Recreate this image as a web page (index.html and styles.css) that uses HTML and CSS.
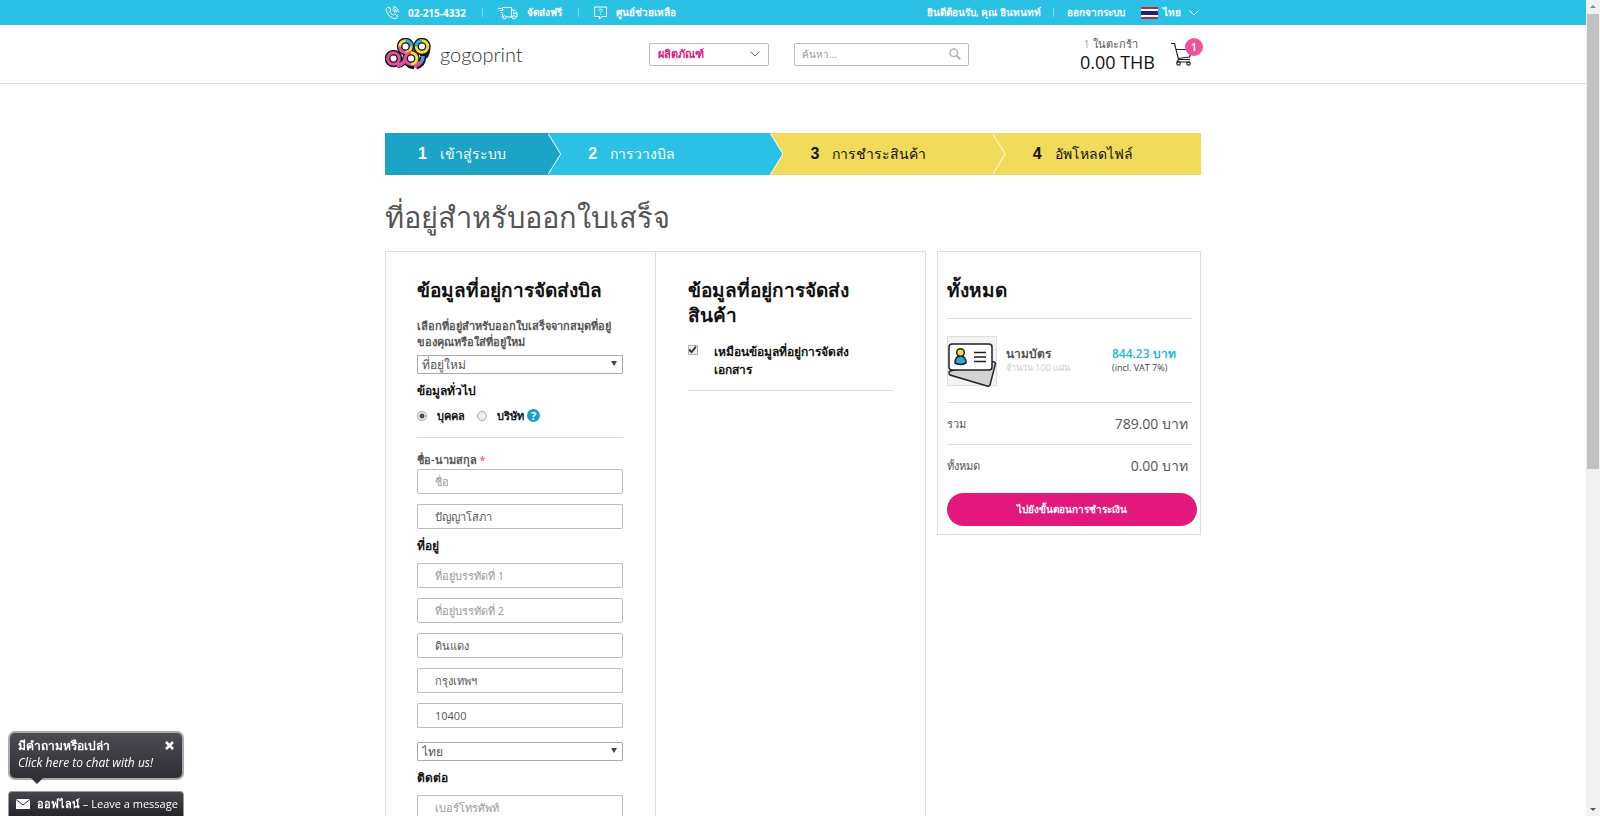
FILE: index.html
```html
<!DOCTYPE html>
<html lang="th">
<head>
    <meta charset="UTF-8">
    <meta name="viewport" content="width=device-width, initial-scale=1.0">
    <title>Gogoprint</title>
    <link rel="stylesheet" href="styles.css">
</head>
<body>
    <div class="page">
        <div class="topbar">
            <div class="container topbar-inner">
                <div class="top-left">
                    <a href="#" class="phone">
                        <svg width="14" height="14" viewBox="0 0 14 14"><path d="M2.5 1.5l1.6-.5 1.8 3-1.2 1.3c.7 1.7 2 3 3.7 3.8L9.700 8l2.900 1.900-.6 1.700c-.8 1.300-2.600 1.300-4.300.5C4.800 10.800 2.600 8.400 1.500 5.500 1 4 1.200 2.200 2.500 1.500zM7.500 4a2.800 2.800 0 0 1 2.500 2.700M7.700 2.300a4.600 4.600 0 0 1 4 4.200M8 .6a6.200 6.200 0 0 1 5.400 5.600"/></svg>
                        <span>02-215-4332</span>
                    </a>
                    <a href="#">
                        <svg width="20" height="14" viewBox="0 0 20 14"><path d="M4.500 5V1.500h9V11H8M5 11h-.5V7.500M13.500 4h3l2.500 3v4h-1.500M0 2.500h4.500M1.500 4.500h3M3 6.500h1.500M15.500 5.500v2H18M13.500 11h.5"/><circle cx="6.500" cy="11.300" r="1.600"/><circle cx="15.700" cy="11.300" r="1.600"/></svg>
                        <span>จัดส่งฟรี</span>
                    </a>
                    <a href="#">
                        <svg width="13" height="14" viewBox="0 0 13 14"><path d="M.5 1h12v9.500H7.500L5.500 13v-2.500h-5zM5 4.500c0-2 3-2 3 0 0 1-1.500 1-1.500 2.200M6.500 8v.8"/></svg>
                        <span>ศูนย์ช่วยเหลือ</span>
                    </a>
                </div>
                <div class="top-right">
                    <span>ยินดีต้อนรับ, คุณ อินทนทท์</span>
                    <a href="#">ออกจากระบบ</a>
                    <button type="button" class="lang">
                        <svg width="17" height="12" viewBox="0 0 17 12"><path fill="#c2273d" d="M0 0h17v12H0z"/><path fill="#fff" d="M0 2h17v8H0z"/><path fill="#22256b" d="M0 4h17v4H0z"/></svg>
                        <span>ไทย</span>
                        <svg class="chevron" width="10" height="6" viewBox="0 0 10 6"><path d="M.5.5L5 5 9.500.5"/></svg>
                    </button>
                </div>
            </div>
        </div>

        <header class="header">
            <div class="container header-inner">
                <a href="#" class="logo">
                    <svg width="46" height="32" viewBox="0 0 46 32" fill="none">
                        <g stroke="#17161a" stroke-width="6.500"><circle cx="20.500" cy="8.500" r="5.500"/><circle cx="37" cy="8.500" r="5.500"/><path d="M20.500 19c0 4-3 7.500-8 8M42 11c0 5-3 8-6 9M23 24c1 3 3 4 6 4M38 19c0 5-3 8-7 9"/><circle cx="8.500" cy="20.500" r="5.500"/><circle cx="26" cy="20.500" r="5.500"/></g>
                        <g stroke-width="3.500"><path stroke="#35a4dc" d="M20.500 18c0 5-3 8.500-8 9M38 18c0 5-3 8.500-7 9"/><path stroke="#e84ba0" d="M12 27.500c3 0 6-2 8-5M29 28.500c3-1 5-2 6-5"/><circle cx="20.500" cy="8.500" r="5.500" stroke="#f3dc35"/><path stroke="#35a4dc" d="M20.500 3a5.500 5.500 0 0 1 5.500 5.500"/><path stroke="#e84ba0" d="M20.500 14a5.500 5.500 0 0 1-5.500-5.500"/><circle cx="37" cy="8.500" r="5.500" stroke="#f3dc35"/><path stroke="#35a4dc" d="M31.500 8.500a5.500 5.500 0 0 1 5.500-5.500"/><circle cx="8.500" cy="20.500" r="5.500" stroke="#e84ba0"/><circle cx="26" cy="20.500" r="5.500" stroke="#e84ba0"/><path stroke="#f3dc35" d="M26 15a5.500 5.500 0 0 1 0 11"/></g>
                        <g fill="#fff" stroke="#17161a" stroke-width="1.300"><circle cx="20.500" cy="8.500" r="3.700"/><circle cx="37" cy="8.500" r="3.700"/><circle cx="8.500" cy="20.500" r="3.700"/><circle cx="26" cy="20.500" r="3.700"/></g>
                    </svg>
                    <span>gogoprint</span>
                </a>
                <button type="button" class="products">
                    <span>ผลิตภัณฑ์</span>
                    <svg class="chevron" width="10" height="6" viewBox="0 0 10 6"><path d="M.5.5L5 5 9.500.5"/></svg>
                </button>
                <form class="search">
                    <input type="text" placeholder="ค้นหา..." aria-label="ค้นหา">
                    <button type="button" aria-label="ค้นหา">
                        <svg width="12" height="12" viewBox="0 0 12 12" fill="none" stroke="#b5b5b5"><circle cx="4.800" cy="4.800" r="3.800" stroke-width="1.500"/><path stroke-width="2" d="M7.700 7.700L11.300 11.300"/></svg>
                    </button>
                </form>
                <div class="cart">
                    <div class="cart-text">
                        <div class="cart-count"><span>1</span> ในตะกร้า</div>
                        <div class="cart-total">0.00 THB</div>
                    </div>
                    <a href="#" class="cart-icon">
                        <svg width="22" height="24" viewBox="0 0 22 24" fill="none" stroke="#222" stroke-width="1.200"><path d="M0 1.500h3.500l4 16H19M5 7.500h16L18.500 15 7 16.500"/><path d="M7.500 17.500L6 20h13"/><circle cx="7.500" cy="21.500" r="1.700"/><circle cx="17.500" cy="21.500" r="1.700"/></svg>
                        <span class="badge">1</span>
                    </a>
                </div>
            </div>
        </header>

        <main class="container">
            <ol class="steps">
                <li class="step step-done"><b>1</b>เข้าสู่ระบบ</li>
                <li class="step step-active"><b>2</b>การวางบิล</li>
                <li class="step"><b>3</b>การชำระสินค้า</li>
                <li class="step"><b>4</b>อัพโหลดไฟล์</li>
            </ol>

            <h1>ที่อยู่สำหรับออกใบเสร็จ</h1>

            <div class="checkout">
                <form class="panel addresses">
                    <div class="col">
                        <h2>ข้อมูลที่อยู่การจัดส่งบิล</h2>
                        <label class="intro" for="address-book">เลือกที่อยู่สำหรับออกใบเสร็จจากสมุดที่อยู่<br>ของคุณหรือใส่ที่อยู่ใหม่</label>
                        <div class="select-wrap">
                            <select id="address-book"><option>ที่อยู่ใหม่</option></select>
                        </div>
                        <h3>ข้อมูลทั่วไป</h3>
                        <div class="radios">
                            <label><input type="radio" name="type" checked>บุคคล</label>
                            <label><input type="radio" name="type">บริษัท</label>
                            <span class="help">?</span>
                        </div>
                        <label class="field-label" for="firstname">ชื่อ-นามสกุล <span class="required">*</span></label>
                        <div class="fields">
                            <input type="text" id="firstname" placeholder="ชื่อ">
                            <input type="text" value="ปัญญาโสภา" aria-label="นามสกุล">
                        </div>
                        <h3>ที่อยู่</h3>
                        <div class="fields">
                            <input type="text" placeholder="ที่อยู่บรรทัดที่ 1" aria-label="ที่อยู่บรรทัดที่ 1">
                            <input type="text" placeholder="ที่อยู่บรรทัดที่ 2" aria-label="ที่อยู่บรรทัดที่ 2">
                            <input type="text" value="ดินแดง" aria-label="เขต">
                            <input type="text" value="กรุงเทพฯ" aria-label="จังหวัด">
                            <input type="text" value="10400" aria-label="รหัสไปรษณีย์">
                        </div>
                        <div class="select-wrap country">
                            <select aria-label="ประเทศ"><option>ไทย</option></select>
                        </div>
                        <h3>ติดต่อ</h3>
                        <div class="fields">
                            <input type="text" placeholder="เบอร์โทรศัพท์" aria-label="เบอร์โทรศัพท์">
                        </div>
                    </div>
                    <div class="col">
                        <h2>ข้อมูลที่อยู่การจัดส่ง<br>สินค้า</h2>
                        <label class="same">
                            <input type="checkbox" checked>
                            <span>เหมือนข้อมูลที่อยู่การจัดส่ง<br>เอกสาร</span>
                        </label>
                    </div>
                </form>

                <aside class="panel summary">
                    <h2>ทั้งหมด</h2>
                    <div class="item">
                        <div class="thumb">
                            <svg width="50" height="51" viewBox="0 0 50 51" stroke="#222" stroke-width="1.500"><path fill="#d3d3d4" d="M3 35L44 26q4-1 4.500 1.500L43 49q-1 1.500-3 1L3 39q-2-2 0-4z"/><rect x="2" y="8" width="43" height="26" rx="3" fill="#fff"/><path fill="#2aa9d8" d="M8 27q0-7 5.500-7t5.500 7q-5.500 3-11 0z"/><circle cx="13.500" cy="16.500" r="3.800" fill="#f3dc4a"/><path d="M27 16.500h12M27 21h12M27 25.500h12"/></svg>
                        </div>
                        <div class="item-name">นามบัตร<small>จำนวน 100 แผ่น</small></div>
                        <div class="item-price">844.23 บาท<small>(incl. VAT 7%)</small></div>
                    </div>
                    <div class="row"><span>รวม</span><span class="amount">789.00 บาท</span></div>
                    <div class="row total"><span>ทั้งหมด</span><span class="amount">0.00 บาท</span></div>
                    <button type="button" class="pay">ไปยังขั้นตอนการชำระเงิน</button>
                </aside>
            </div>
        </main>
    </div>

    <div class="scrollbar">
        <i class="arrow-up"></i>
        <div class="thumb-bar"></div>
        <i class="arrow-down"></i>
    </div>

    <div class="chat">
        <div class="chat-bubble">
            <div>
                <strong>มีคำถามหรือเปล่า</strong>
                <em>Click here to chat with us!</em>
            </div>
            <button type="button" aria-label="ปิด">
                <svg width="9" height="9" viewBox="0 0 9 9" stroke="#fff" stroke-width="2.500"><path d="M1 1l7 7M8 1L1 8"/></svg>
            </button>
        </div>
        <button type="button" class="chat-bar">
            <svg width="14" height="10" viewBox="0 0 14 10"><path fill="#fff" d="M0 0h14v10H0z"/><path fill="none" stroke="#35353a" d="M0 .5l7 5.500 7-5.500"/></svg>
            <span><b>ออฟไลน์</b> – Leave a message</span>
        </button>
    </div>
</body>
</html>
```
FILE: styles.css
```css
* {
    box-sizing: border-box;
}
body {
    margin: 0;
    height: 100vh;
    overflow: hidden;
    display: flex;
    background: #fff;
    color: #555;
    font-family: "Open Sans", sans-serif;
    font-size: 11px;
}
a {
    color: inherit;
    text-decoration: none;
}
button, input, select {
    font-family: inherit;
}
button {
    cursor: pointer;
}
.page {
    flex: 1;
    min-width: 0;
}
.container {
    max-width: 816px;
    margin: 0 auto;
}

/* top bar */
.topbar {
    background: #2bc1e5;
    color: #fff;
}
.topbar-inner {
    display: flex;
    justify-content: space-between;
    align-items: center;
    height: 25px;
    font-size: 10px;
    font-weight: 600;
}
.top-left, .top-right, .top-left a, .lang {
    display: flex;
    align-items: center;
}
.top-left a {
    gap: 9px;
}
.top-left a + a, .top-right a {
    margin-left: 16px;
    padding-left: 16px;
    background: linear-gradient(#7fdaf0, #7fdaf0) left center / 1px 9px no-repeat;
}
.top-left svg, .chevron {
    fill: none;
    stroke: currentColor;
}
.phone span {
    font-weight: 700;
}
.top-right {
    margin-right: 2px;
}
.top-right a {
    margin-left: 12px;
    padding-left: 14px;
}
.lang {
    gap: 5px;
    margin-left: 16px;
    padding: 0;
    border: 0;
    background: none;
    color: #fff;
    font-size: 10px;
    font-weight: 600;
}
.lang .chevron {
    margin-left: 3px;
}

/* header */
.header {
    border-bottom: 1px solid #ddd;
}
.header-inner {
    display: flex;
    align-items: center;
    height: 58px;
}
.logo {
    display: flex;
    align-items: center;
    gap: 9px;
    width: 264px;
    color: #333;
    font-family: Lato, sans-serif;
    font-size: 20px;
    font-weight: 300;
}
.products {
    display: flex;
    justify-content: space-between;
    align-items: center;
    width: 120px;
    height: 23px;
    padding: 0 8px;
    border: 1px solid #bbb;
    border-radius: 2px;
    background: #fff;
    color: #e2187d;
    font-size: 11px;
    font-weight: 700;
}
.search {
    display: flex;
    align-items: center;
    width: 175px;
    height: 23px;
    margin-left: 25px;
    padding: 0 7px;
    border: 1px solid #bbb;
    border-radius: 2px;
}
.search input {
    flex: 1;
    min-width: 0;
    padding: 0;
    border: 0;
    font-size: 10px;
}
.search button {
    display: flex;
    padding: 0;
    border: 0;
    background: none;
}
.cart {
    display: flex;
    align-items: center;
    gap: 16px;
    margin-left: auto;
    margin-right: 8px;
}
.cart-count {
    padding-right: 14px;
    text-align: center;
    line-height: 16px;
}
.cart-count span {
    color: #aaa;
}
.cart-total {
    color: #111;
    font-size: 18px;
    font-weight: 500;
    line-height: 20px;
}
.cart-icon {
    position: relative;
    display: flex;
}
.badge {
    position: absolute;
    top: -4px;
    right: -10px;
    width: 18px;
    border-radius: 50%;
    background: #f0529c;
    color: #fff;
    font-size: 11px;
    font-weight: 600;
    line-height: 18px;
    text-align: center;
}

/* steps */
.steps {
    display: grid;
    grid-template-columns: 163fr 222fr 222fr 208fr;
    margin: 49px 0 0;
    padding: 0;
    list-style: none;
}
.step {
    position: relative;
    display: flex;
    align-items: center;
    gap: 13px;
    height: 42px;
    padding-left: 40px;
    background: #f2db5a;
    color: #111;
    font-size: 14px;
    font-weight: 500;
}
.step b {
    font-family: "Liberation Sans", Arial, sans-serif;
    font-size: 16px;
}
.step-done {
    padding-left: 33px;
    background: #1ba4c5;
    color: #fff;
}
.step-active {
    background: #2bc1e5;
    color: #fff;
}
.step:not(:last-child)::before, .step:not(:last-child)::after {
    content: "";
    position: absolute;
    z-index: 1;
    top: 0;
    left: 100%;
    width: 13px;
    height: 42px;
    background: #fff;
    clip-path: polygon(0 0, 100% 50%, 0 100%);
}
.step:not(:last-child)::after {
    left: calc(100% - 1px);
    background: inherit;
}

h1 {
    margin: 21px 0 13px;
    font-size: 29px;
    font-weight: 400;
    line-height: 42px;
}

/* checkout panels */
.checkout {
    display: flex;
    align-items: flex-start;
    gap: 11px;
}
.panel {
    border: 1px solid #ddd;
}
.addresses {
    flex: 1;
    display: grid;
    grid-template-columns: 1fr 1fr;
}
.col {
    padding: 26px 32px;
}
.col:first-child {
    padding-left: 31px;
    border-right: 1px solid #ddd;
}
h2 {
    margin: 0;
    color: #111;
    font-size: 19px;
    font-weight: 600;
    line-height: 25px;
    white-space: nowrap;
}
h3 {
    margin: 0;
    color: #111;
    font-size: 12px;
    font-weight: 600;
    line-height: 34px;
}
.intro {
    display: block;
    margin: 15px 0 5px;
    font-weight: 600;
    line-height: 16px;
    white-space: nowrap;
}
.select-wrap {
    position: relative;
}
.select-wrap::after {
    content: "";
    position: absolute;
    top: 6px;
    right: 6px;
    border: 3px solid transparent;
    border-top: 5px solid #444;
    border-bottom: 0;
}
select {
    display: block;
    width: 100%;
    height: 19px;
    padding: 0 4px;
    appearance: none;
    border: 1px solid #aaa;
    border-radius: 1px;
    background: #fff;
    color: #555;
    font-size: 12px;
    line-height: 17px;
}
.radios {
    display: flex;
    align-items: center;
    height: 30px;
    padding-bottom: 14px;
    margin-bottom: 14px;
    border-bottom: 1px solid #ddd;
    color: #111;
    font-weight: 600;
}
.radios label {
    display: flex;
    align-items: center;
    gap: 10px;
    margin-right: 12px;
}
.radios label + label {
    margin-right: 3px;
}
input[type="radio"], input[type="checkbox"] {
    flex: none;
    appearance: none;
    width: 10px;
    height: 10px;
    margin: 0;
    border: 1px solid #aaa;
    border-radius: 50%;
    background: #eee;
}
input[type="radio"]:checked {
    background: radial-gradient(#555 40%, #eee 50%);
}
.help {
    width: 13px;
    border-radius: 50%;
    background: #1b9ec6;
    color: #fff;
    font-weight: 700;
    line-height: 13px;
    text-align: center;
}
.field-label {
    display: block;
    margin-bottom: 1px;
    font-weight: 600;
    line-height: 16px;
}
.required {
    color: #e66;
}
.fields {
    display: grid;
    gap: 10px;
}
.fields input {
    width: 100%;
    height: 25px;
    padding: 0 17px;
    border: 1px solid #bbb;
    border-radius: 2px;
    color: #555;
    font-size: 11px;
}
::placeholder {
    color: #999;
    opacity: 1;
}
.country {
    margin-top: 14px;
}
.same {
    display: flex;
    gap: 16px;
    margin-top: 15px;
    padding-bottom: 11px;
    border-bottom: 1px solid #ddd;
    color: #111;
    font-size: 12px;
    font-weight: 600;
    line-height: 18px;
    white-space: nowrap;
}
.same input[type="checkbox"] {
    margin-top: 2px;
    border-radius: 1px;
}
.same input:checked::before {
    content: "";
    display: block;
    width: 8px;
    height: 8px;
    background: #333;
    clip-path: polygon(0 55%, 18% 35%, 38% 58%, 82% 0, 100% 18%, 40% 95%);
}

/* order summary */
.summary {
    width: 264px;
    padding: 26px 3px 8px 9px;
}
.summary h2 {
    margin-right: 5px;
    padding-bottom: 15px;
    border-bottom: 1px solid #ddd;
}
.item {
    display: flex;
    align-items: center;
    gap: 9px;
    height: 84px;
    margin-right: 5px;
    border-bottom: 1px solid #ddd;
}
.thumb {
    width: 50px;
    height: 50px;
    background: #f3f3f3;
    border: 1px solid #ddd;
}
.thumb svg {
    display: block;
    margin: -1px;
}
.item-name {
    flex: 1;
    font-size: 12px;
    font-weight: 600;
    line-height: 15px;
}
.item-price {
    width: 80px;
    color: #2bb5da;
    font-size: 12px;
    font-weight: 600;
    line-height: 15px;
}
.item small {
    display: block;
    color: #ccc;
    font-size: 9px;
    font-weight: 400;
    line-height: 14px;
}
.item-price small {
    color: #444;
}
.row {
    display: flex;
    justify-content: space-between;
    align-items: center;
    height: 42px;
    margin-right: 5px;
    padding-right: 4px;
    border-bottom: 1px solid #ddd;
}
.amount {
    font-size: 14px;
}
.total {
    height: 48px;
    padding-bottom: 6px;
    border: 0;
}
.total .amount {
    font-weight: 500;
}
.pay {
    display: block;
    width: 100%;
    height: 33px;
    padding: 0;
    border: 0;
    border-radius: 17px;
    background: #e2187d;
    color: #fff;
    font-size: 10px;
    font-weight: 700;
}

/* window scrollbar */
.scrollbar {
    display: flex;
    flex-direction: column;
    align-items: center;
    width: 14px;
    padding: 5px 1px;
    background: #f1f1f1;
}
.arrow-up, .arrow-down {
    border: 3px solid transparent;
}
.arrow-up {
    margin-bottom: 6px;
    border-top: 0;
    border-bottom-color: #888;
}
.arrow-down {
    margin-top: auto;
    border-bottom: 0;
    border-top-color: #555;
}
.thumb-bar {
    width: 100%;
    height: 56.5%;
    background: #c1c1c1;
}

/* chat widget */
.chat {
    position: fixed;
    left: 8px;
    bottom: 0;
    width: 176px;
    color: #fff;
}
.chat-bubble {
    position: relative;
    display: flex;
    justify-content: space-between;
    align-items: flex-start;
    height: 49px;
    margin-bottom: 11px;
    padding: 4px 8px;
    border: 2px solid #aaa;
    border-radius: 7px;
    background: linear-gradient(#4b4b51, #303036);
    font-size: 12px;
    line-height: 17px;
}
.chat-bubble::after {
    content: "";
    position: absolute;
    top: 100%;
    left: 21px;
    border: 6px solid transparent;
    border-top-color: #303036;
    border-bottom: 0;
}
.chat-bubble strong, .chat-bubble em {
    display: block;
}
.chat-bubble button {
    padding: 4px 0;
    border: 0;
    background: none;
    line-height: 0;
}
.chat-bar {
    display: flex;
    align-items: center;
    gap: 7px;
    width: 100%;
    height: 25px;
    padding: 0 7px;
    border: 1px solid #999;
    border-bottom: 0;
    border-radius: 4px 4px 0 0;
    background: linear-gradient(#45454b, #25252a);
    color: #fff;
    font-size: 11px;
    white-space: nowrap;
}
.chat-bar svg {
    flex: none;
}
```
